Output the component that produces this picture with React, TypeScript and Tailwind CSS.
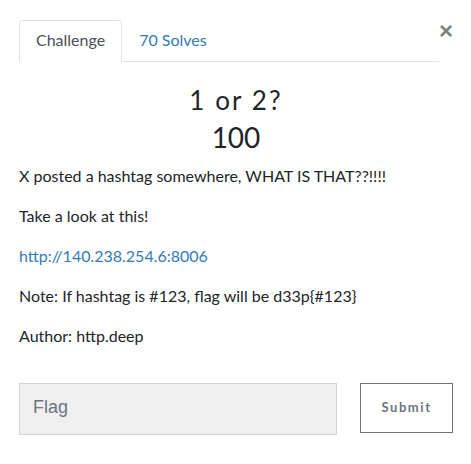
import React from 'react';

const App: React.FC = () => {
  return (
    <div className="w-[471px] h-[464px] bg-white font-['Lato',sans-serif] text-[#212529]">
      <div className="pt-[20px] pl-[19px] pr-[18px]">
        <div className="flex items-start">
          <ul className="flex w-[420px] border-b border-[#dee2e6]">
            <li className="-mb-px">
              <span className="block px-4 pt-[7px] pb-[9px] text-[16px] leading-6 text-[#495057] border border-[#dee2e6] border-b-white rounded-t bg-white">
                Challenge
              </span>
            </li>
            <li className="-mb-px">
              <span className="block px-4 pt-[7px] pb-[9px] text-[16px] leading-6 text-[#337ab7] border border-transparent">
                70 Solves
              </span>
            </li>
          </ul>
          <button className="ml-auto mt-[-1px] text-[24px] leading-none font-bold text-[#808080] font-['Liberation_Sans',sans-serif]">
            ×
          </button>
        </div>

        <div className="text-center mt-[23px]">
          <h3 className="text-[26px] leading-[30px] tracking-[0.08em] font-normal">1 or 2?</h3>
          <h4 className="text-[28px] leading-[34px] mt-[5px]">100</h4>
        </div>

        <div className="mt-[10px] text-[16px] leading-6 space-y-4">
          <p>X posted a hashtag somewhere, WHAT IS THAT??!!!!</p>
          <p>Take a look at this!</p>
          <p>
            <a className="text-[#337ab7]">http://140.238.254.6:8006</a>
          </p>
          <p>Note: If hashtag is #123, flag will be d33p{'{#123}'}</p>
          <p>Author: http.deep</p>
        </div>

        <div className="flex items-start mt-[35px]">
          <input
            placeholder="Flag"
            className="w-[318px] h-[52px] bg-[#efefef] border border-[#ccd4dc] pl-[13px] pb-[3px] text-[18px] font-['Liberation_Sans',sans-serif] placeholder:text-[#6c757d] outline-none"
          />
          <button className="ml-[23px] w-[93px] h-[50px] border border-[#6c757d] text-[13px] font-bold tracking-[0.12em] text-[#6c757d]">
            Submit
          </button>
        </div>
      </div>
    </div>
  );
};

export default App;
